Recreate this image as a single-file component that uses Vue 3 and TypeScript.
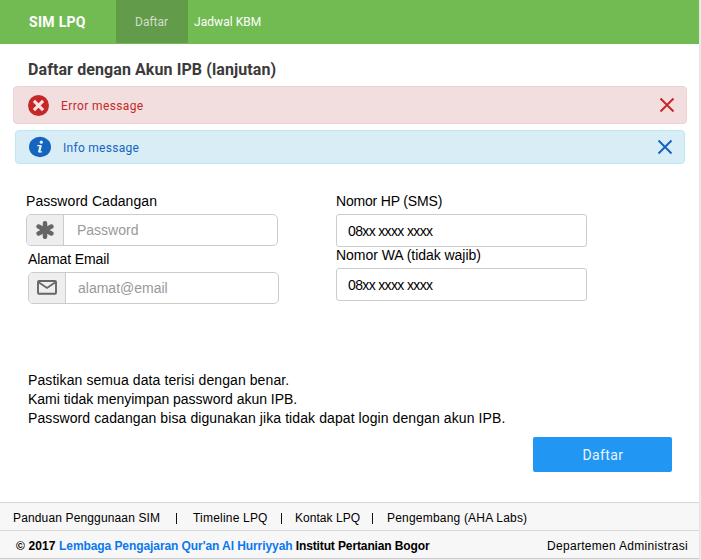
<script setup lang="ts">
import { ref } from 'vue'

interface Alert {
  kind: 'error' | 'info'
  text: string
}

const alerts = ref<Alert[]>([
  { kind: 'error', text: 'Error message' },
  { kind: 'info', text: 'Info message' },
])

const password = ref('')
const email = ref('')
const phone = ref('08xx xxxx xxxx')
const whatsapp = ref('08xx xxxx xxxx')

function dismiss(kind: Alert['kind']) {
  alerts.value = alerts.value.filter((a) => a.kind !== kind)
}
</script>

<template>
  <div class="page">
    <header class="navbar">
      <div class="brand">SIM LPQ</div>
      <nav class="nav">
        <a class="nav-item active">Daftar</a>
        <a class="nav-item">Jadwal KBM</a>
      </nav>
    </header>

    <main class="content">
      <h1 class="title">Daftar dengan Akun IPB (lanjutan)</h1>

      <div v-for="a in alerts" :key="a.kind" class="alert" :class="a.kind">
        <svg v-if="a.kind === 'error'" class="alert-icon" viewBox="0 0 22 22">
          <circle cx="11" cy="11" r="11" fill="#c62828" />
          <path d="M6.2 6.2 L15.8 15.8 M15.8 6.2 L6.2 15.8" stroke="#f6e4e4" stroke-width="3.2" />
        </svg>
        <svg v-else class="alert-icon" viewBox="0 0 22 22">
          <ellipse cx="11" cy="11" rx="11" ry="10.2" fill="#1565c0" />
          <circle cx="12.3" cy="6.2" r="1.6" fill="#e3f1f8" />
          <path d="M8.2 9.7 H12.2 M9.6 15.8 H13" fill="none" stroke="#e3f1f8" stroke-width="1.3" />
          <path d="M11.7 9.2 L10.1 16.2" stroke="#e3f1f8" stroke-width="2.3" />
        </svg>
        <span class="alert-text">{{ a.text }}</span>
        <button class="close" type="button" @click="dismiss(a.kind)">
          <svg viewBox="0 0 16 16">
            <path d="M1.5 1.5 L14.5 14.5 M14.5 1.5 L1.5 14.5" stroke="currentColor" stroke-width="2" />
          </svg>
        </button>
      </div>

      <form class="form" @submit.prevent>
        <div class="column left">
          <label class="label password-label">Password Cadangan</label>
          <div class="group password-group">
            <span class="addon">
              <svg class="asterisk" viewBox="0 0 18 18">
                <path d="M9 2.2 V15.8 M2.6 5.6 L15.4 12.4 M15.4 5.6 L2.6 12.4" stroke="#666" stroke-width="4.5" stroke-linecap="round" />
              </svg>
            </span>
            <input v-model="password" type="password" placeholder="Password" />
          </div>
          <label class="label email-label">Alamat Email</label>
          <div class="group email-group">
            <span class="addon">
              <svg class="mail" viewBox="0 0 20 15">
                <rect x="1" y="1" width="18" height="12.8" rx="1" fill="none" stroke="#666" stroke-width="1.9" />
                <path d="M2 2.5 L10 8 L18 2.5" fill="none" stroke="#666" stroke-width="1.7" />
              </svg>
            </span>
            <input v-model="email" type="text" placeholder="alamat@email" />
          </div>
        </div>
        <div class="column right">
          <label class="label">Nomor HP (SMS)</label>
          <input v-model="phone" class="plain" type="text" />
          <label class="label wa-label">Nomor WA (tidak wajib)</label>
          <input v-model="whatsapp" class="plain wa" type="text" />
        </div>
      </form>

      <div class="notes">
        <p>Pastikan semua data terisi dengan benar.</p>
        <p class="middle">Kami tidak menyimpan password akun IPB.</p>
        <p>Password cadangan bisa digunakan jika tidak dapat login dengan akun IPB.</p>
      </div>
      <button class="submit" type="submit">Daftar</button>
    </main>

    <footer class="footer">
      <div class="links">
        <a class="panduan">Panduan Penggunaan SIM</a>
        <span class="bar"></span>
        <a class="timeline">Timeline LPQ</a>
        <span class="bar"></span>
        <a class="kontak">Kontak LPQ</a>
        <span class="bar"></span>
        <a class="labs">Pengembang (AHA Labs)</a>
      </div>
      <div class="legal">
        <strong><span class="year">© 2017 </span><a class="org">Lembaga Pengajaran Qur'an Al Hurriyyah</a><span class="campus"> Institut Pertanian Bogor</span></strong>
        <span class="dept">Departemen Administrasi</span>
      </div>
    </footer>
  </div>
</template>

<style>
body {
  background: #ececec;
}
</style>

<style scoped>
.page {
  box-sizing: border-box;
  width: 699px;
  height: 559px;
  display: flex;
  flex-direction: column;
  background: #fff;
  border-bottom: 1px solid #ccc;
  box-shadow: 0 0 1px #bbb;
  font-family: "Liberation Sans", Arial, sans-serif;
  color: #000;
  white-space: nowrap;
}
.navbar {
  flex: none;
  height: 44px;
  display: flex;
  background: #72bb53;
  color: #fff;
  font: 13px/44px Roboto, sans-serif;
}
.brand {
  box-sizing: border-box;
  width: 116px;
  padding-left: 29px;
  font-size: 14px;
  font-weight: 700;
  letter-spacing: 0.3px;
}
.nav {
  display: flex;
}
.nav-item {
  height: 43px;
  padding-left: 6px;
  font-size: 12px;
  letter-spacing: 0.05px;
}
.nav-item.active {
  box-sizing: border-box;
  width: 72px;
  padding-left: 19px;
  background: #629b49;
  color: #d0dfc8;
  letter-spacing: 0;
}
.content {
  flex: 1;
  display: flex;
  flex-direction: column;
}
.title {
  margin: 14px 0 4px 28px;
  font: 700 16px/24px Roboto, sans-serif;
  letter-spacing: 0.09px;
  color: #3b3b3b;
}
.alert {
  box-sizing: border-box;
  display: flex;
  align-items: center;
  border: 1px solid;
  border-radius: 4px;
  font: 12px/20px Roboto, sans-serif;
}
.alert.error {
  height: 38px;
  margin: 0 12px 6px 13px;
  padding: 0 11px 0 14px;
  background: #f2dede;
  border-color: #eed0d5;
  color: #c62828;
  letter-spacing: 0.38px;
}
.alert.info {
  height: 34px;
  margin: 0 14px 0 15px;
  padding: 0 11px 0 13px;
  background: #d9edf7;
  border-color: #b8e8f0;
  color: #1565c0;
  letter-spacing: 0.28px;
}
.alert-icon {
  width: 22px;
  height: 22px;
  margin-right: 12px;
}
.error .alert-icon {
  width: 21px;
  height: 21px;
}
.alert-text {
  flex: 1;
  padding-top: 1px;
}
.close {
  display: flex;
  padding: 0;
  border: 0;
  background: none;
  color: inherit;
}
.close svg {
  width: 16px;
  height: 16px;
}
.form {
  display: grid;
  grid-template-columns: 310px 251px;
  margin: 28px 0 0 26px;
}
.column {
  display: flex;
  flex-direction: column;
}
.label {
  height: 22px;
  font-size: 14px;
  line-height: 18px;
}
.password-label {
  letter-spacing: 0.06px;
}
.group {
  box-sizing: border-box;
  display: flex;
  height: 32px;
  border: 1px solid #ccc;
  border-radius: 5px;
  overflow: hidden;
}
.password-group {
  width: 252px;
}
.email-label {
  height: 22px;
  margin: 4px 0 0 2px;
  letter-spacing: -0.1px;
}
.email-group {
  width: 251px;
  margin-left: 2px;
}
.addon {
  box-sizing: border-box;
  width: 37px;
  display: flex;
  align-items: center;
  justify-content: center;
  background: #eee;
  border-right: 1px solid #ccc;
}
.asterisk {
  width: 18px;
  height: 18px;
}
.mail {
  width: 20px;
  height: 15px;
  margin-bottom: 2px;
}
input {
  box-sizing: border-box;
  min-width: 0;
  padding: 0 12px;
  border: 0;
  background: transparent;
  font: 14px "Liberation Sans", Arial, sans-serif;
  color: #000;
}
.group input {
  flex: 1;
}
.password-group input {
  padding-left: 13px;
}
input::placeholder {
  color: #999;
  opacity: 1;
}
.plain {
  height: 33px;
  padding: 1px 11px 0;
  border: 1px solid #ccc;
  border-radius: 3px;
  background: #fff;
  letter-spacing: -0.64px;
}
.right .label {
  letter-spacing: -0.18px;
}
.right .wa-label {
  height: 21px;
  line-height: 16px;
  letter-spacing: -0.04px;
}
.notes {
  margin: 67px 0 0 28px;
  font-size: 14px;
  line-height: 19px;
  letter-spacing: 0.09px;
}
.notes p {
  margin: 0;
}
.notes .middle {
  letter-spacing: -0.02px;
}
.submit {
  align-self: flex-end;
  width: 139px;
  height: 35px;
  margin: 9px 27px 0 0;
  padding: 0 0 0 1px;
  border: 0;
  border-radius: 2px;
  background: #2196f3;
  color: #e9f5ff;
  font: 14px Roboto, sans-serif;
  letter-spacing: 0.4px;
}
.footer {
  flex: none;
  height: 56px;
  background: #f7f7f7;
  font-size: 12px;
}
.links {
  box-sizing: border-box;
  height: 28px;
  display: flex;
  align-items: center;
  padding: 3px 0 0 13px;
  border-top: 1px solid #d8d8d8;
}
.bar {
  width: 1px;
  height: 11px;
  background: #111;
}
.panduan {
  width: 163px;
  letter-spacing: 0.14px;
}
.timeline {
  width: 88px;
  margin-left: 16px;
  letter-spacing: 0.2px;
}
.kontak {
  width: 77px;
  margin-left: 13px;
  letter-spacing: 0.04px;
}
.labs {
  margin-left: 14px;
  letter-spacing: 0.2px;
}
.legal {
  box-sizing: border-box;
  height: 28px;
  display: flex;
  align-items: center;
  justify-content: space-between;
  padding: 3px 11px 0 16px;
  border-top: 1px solid #d8d8d8;
}
.year {
  letter-spacing: 0.12px;
}
.org {
  color: #0c77ee;
  letter-spacing: -0.08px;
}
.campus {
  letter-spacing: -0.12px;
}
.dept {
  letter-spacing: 0.3px;
}
</style>
